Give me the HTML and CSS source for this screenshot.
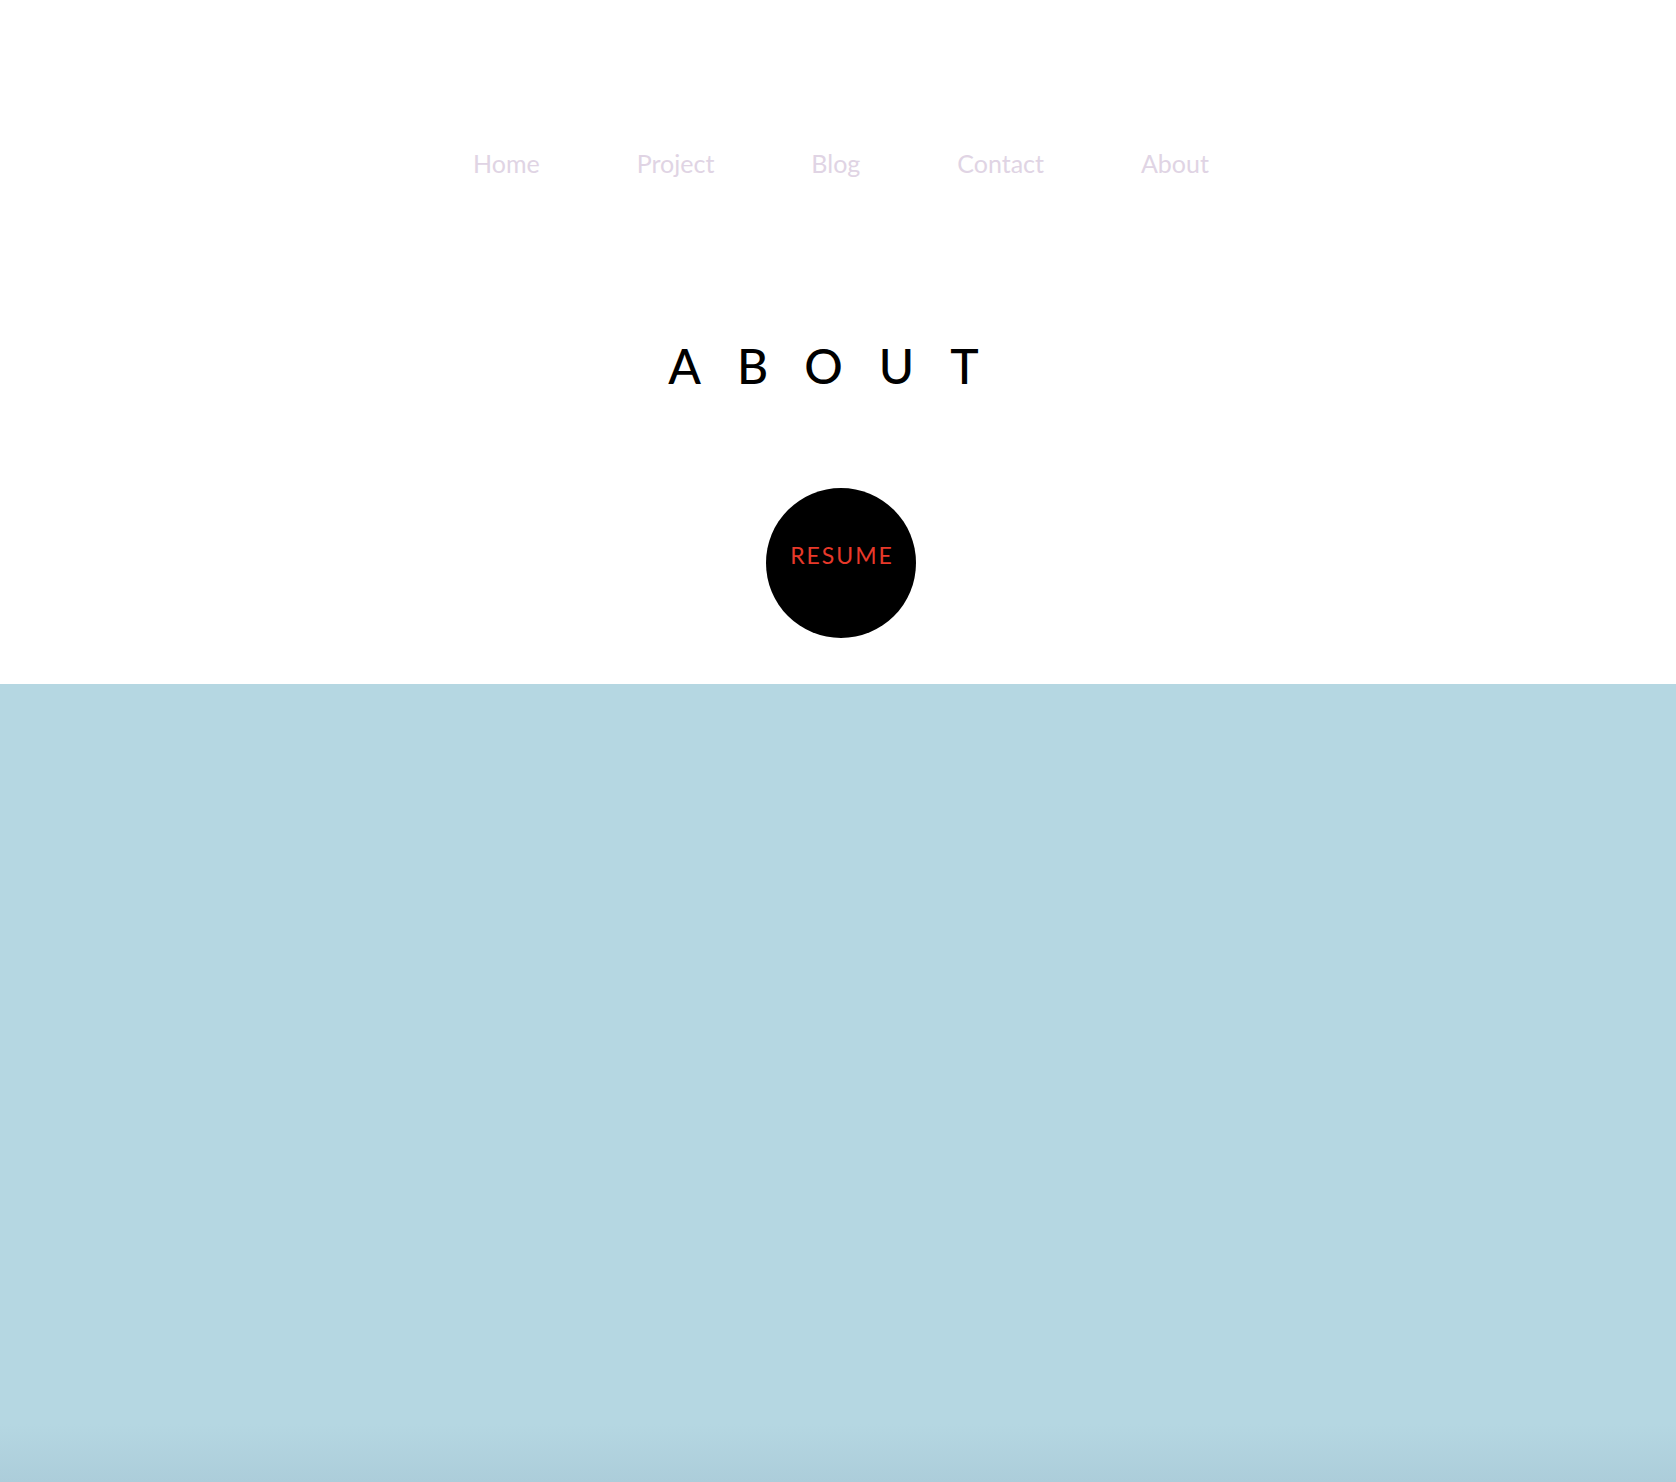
FILE: index.html
```html
<!DOCTYPE html>
<html lang="en">
<head>
<meta charset="utf-8">
<title>About</title>
<link rel="stylesheet" href="styles.css">
</head>
<body>
<header class="top">
  <nav class="nav">
    <a class="nav-link" href="#">Home</a>
    <a class="nav-link" href="#">Project</a>
    <a class="nav-link" href="#">Blog</a>
    <a class="nav-link" href="#">Contact</a>
    <a class="nav-link" href="#">About</a>
  </nav>
  <h1 class="title">ABOUT</h1>
  <div class="resume-wrap">
    <a class="resume" href="#">RESUME</a>
  </div>
</header>
<section class="band"></section>
</body>
</html>
```

FILE: styles.css
```css
html, body {
  margin: 0;
  padding: 0;
}
body {
  font-family: "Lato", "Open Sans", sans-serif;
  background: #ffffff;
}
.top {
  display: flex;
  flex-direction: column;
  align-items: center;
  height: 684px;
}
.nav {
  display: flex;
  gap: 97px;
  padding-top: 148px;
  padding-left: 6px;
}
.nav-link {
  color: #e0d4e4;
  text-decoration: none;
  font-size: 25px;
  line-height: 30px;
}
.title {
  margin: 164px 0 0 0;
  font-size: 48px;
  font-weight: 500;
  letter-spacing: 36px;
  line-height: 48px;
  padding-left: 7px;
  color: #000;
}
.resume-wrap {
  margin-top: 98px;
  margin-left: 6px;
}
.resume {
  display: flex;
  justify-content: center;
  align-items: flex-start;
  box-sizing: border-box;
  width: 150px;
  height: 150px;
  border-radius: 50%;
  background: #000;
  color: #e8392a;
  text-decoration: none;
  font-size: 23px;
  letter-spacing: 2px;
  padding-top: 56px;
  padding-left: 2px;
  line-height: 22px;
}
.band {
  height: 798px;
  background: linear-gradient(to bottom, #b5d7e2 0, #b5d7e2 740px, #accdda 798px);
}
```
